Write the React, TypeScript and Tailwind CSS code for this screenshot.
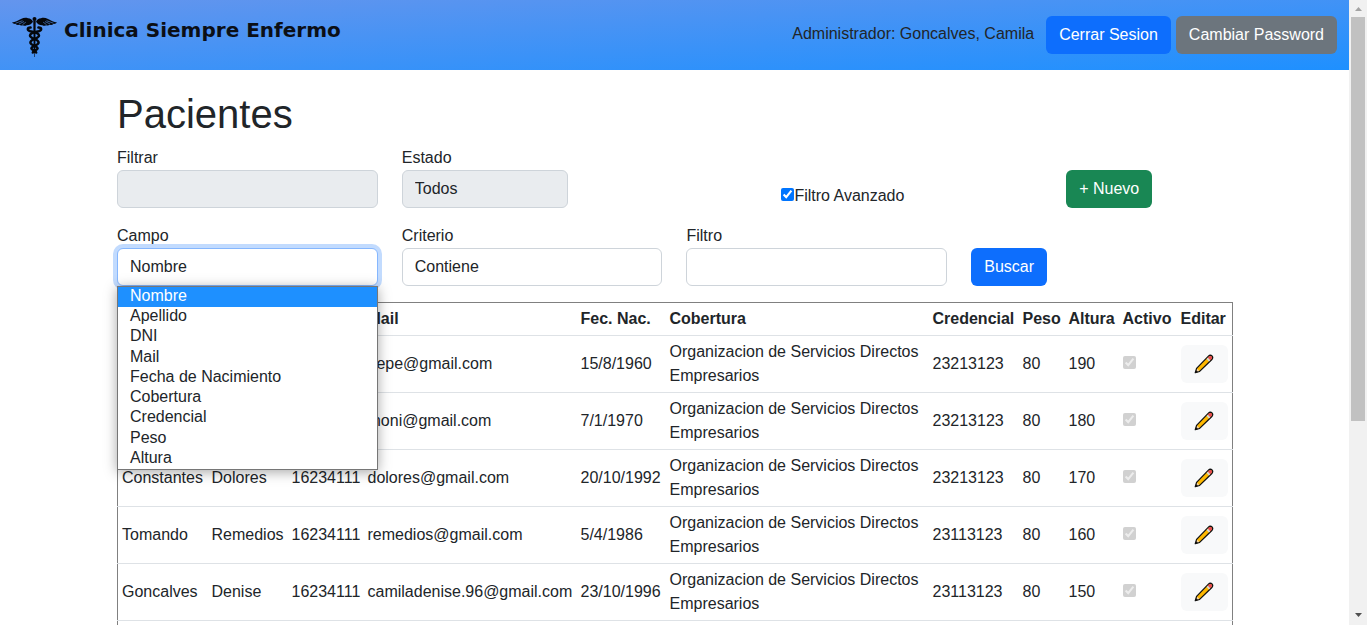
import React from "react";

type Patient = {
  apellido: string;
  nombre: string;
  dni: string;
  mail: string;
  fecha: string;
  cobertura: string;
  credencial: string;
  peso: number;
  altura: number;
};

const COBERTURA = "Organizacion de Servicios Directos Empresarios";

const patients: Patient[] = [
  { apellido: "Argento", nombre: "Pepe", dni: "16234111", mail: "pepe@gmail.com", fecha: "15/8/1960", cobertura: COBERTURA, credencial: "23213123", peso: 80, altura: 190 },
  { apellido: "Argento", nombre: "Moni", dni: "16234111", mail: "moni@gmail.com", fecha: "7/1/1970", cobertura: COBERTURA, credencial: "23213123", peso: 80, altura: 180 },
  { apellido: "Constantes", nombre: "Dolores", dni: "16234111", mail: "dolores@gmail.com", fecha: "20/10/1992", cobertura: COBERTURA, credencial: "23213123", peso: 80, altura: 170 },
  { apellido: "Tomando", nombre: "Remedios", dni: "16234111", mail: "remedios@gmail.com", fecha: "5/4/1986", cobertura: COBERTURA, credencial: "23113123", peso: 80, altura: 160 },
  { apellido: "Goncalves", nombre: "Denise", dni: "16234111", mail: "camiladenise.96@gmail.com", fecha: "23/10/1996", cobertura: COBERTURA, credencial: "23113123", peso: 80, altura: 150 },
];

const fields = [
  "Nombre",
  "Apellido",
  "DNI",
  "Mail",
  "Fecha de Nacimiento",
  "Cobertura",
  "Credencial",
  "Peso",
  "Altura",
];

const headers = ["Apellido", "Nombre", "DNI", "Mail", "Fec. Nac.", "Cobertura", "Credencial", "Peso", "Altura", "Activo", "Editar"];

const columnWidths = [
  "w-[90px]",
  "w-[80px]",
  "w-[76px]",
  "w-[213px]",
  "w-[89px]",
  "w-[263px]",
  "w-[90px]",
  "w-[46px]",
  "w-[54px]",
  "w-[58px]",
  "w-[56px]",
];

const control = "block h-[38px] w-full appearance-none rounded-md border px-3 text-base leading-6 text-[#212529] outline-none";
const button = "h-[38px] rounded-md px-[13px] pb-px text-base leading-6 text-white";

function Wing() {
  return (
    <g>
      <path d="M21 4.800C20 2.500 18.500 1.200 16 1.200C14 .4 11.500 .6 9.500 1.700C6 3.700 3 5 0 5.600C.8 6.600 2.300 7.100 3.600 6.900C4.400 7.900 5.800 8.200 7.200 7.800C8.200 8.700 9.800 8.800 11 8.300C12 9.100 13.600 9 14.600 8.300C17 8.400 19.500 7.400 21 4.800Z" fill="#05070c" />
      <path d="M3.500 6.200L10.500 3.700M6.800 7.100L12 4.500M10.500 7.600L13.800 5.200" stroke="#5b95ef" strokeWidth=".6" fill="none" />
    </g>
  );
}

function Caduceus() {
  return (
    <svg viewBox="0 0 45 40" className="h-10 w-[45px]" aria-hidden="true">
      <Wing />
      <g transform="translate(45 0) scale(-1 1)">
        <Wing />
      </g>
      <circle cx="22.500" cy="2.100" r="2" fill="#05070c" />
      <path d="M21.300 3.500H23.700L23.300 36H21.700Z" fill="#05070c" />
      <path d="M22.500 34V40" stroke="#05070c" strokeWidth=".6" />
      <g fill="none" stroke="#05070c" strokeLinecap="round">
        <path d="M18.600 10.600C15.200 10.200 14.800 13.400 18.300 14.200C22.500 14.900 27 15.700 27 18.600C27 21.800 18.400 22 18.400 25.400C18.400 28.500 25.600 28.600 25.600 31.400C25.600 33.200 20.800 33.500 20.800 35.500" strokeWidth="2.500" />
        <path d="M26.400 10.600C29.800 10.200 30.200 13.400 26.700 14.200C22.500 14.900 18 15.700 18 18.600C18 21.800 26.600 22 26.600 25.400C26.600 28.500 19.400 28.600 19.400 31.400C19.400 33.200 24.200 33.500 24.200 35.500" strokeWidth="2.500" />
      </g>
    </svg>
  );
}

function Pencil() {
  return (
    <svg viewBox="0 0 20 20" className="mx-auto block size-5" aria-hidden="true">
      <path d="M1.300 18.700L2.600 14.400L14.200 2.400C15.600 1 17 1 18 2C19 3 19 4.400 17.600 5.800L5.600 17.400Z" fill="#ffb900" stroke="#111" strokeWidth="1.300" strokeLinejoin="round" />
      <path d="M13.800 3.700L14.900 2.600C15.900 1.600 16.800 1.700 17.500 2.500C18.300 3.200 18.200 4.200 17.200 5.200L16.200 6.200Z" fill="#e74856" />
      <path d="M12.600 4.900L13.800 3.700L16.200 6.200L15 7.400Z" fill="#d5d8dc" />
      <path d="M2 18L3.200 14.700L5.300 16.900Z" fill="#f2d3ad" />
      <path d="M1.200 18.800L2.100 15.900L4.100 17.900Z" fill="#111" />
    </svg>
  );
}

function ScrollBar() {
  return (
    <div className="flex w-[18px] shrink-0 flex-col items-center bg-[#f1f1f1]" aria-hidden="true">
      <div className="flex h-[17px] items-center pt-px">
        <svg viewBox="0 0 7 4" className="h-1 w-[7px]">
          <path d="M0 4L3.500 0L7 4Z" fill="#a3a3a3" />
        </svg>
      </div>
      <div className="h-[404px] w-[14px] bg-[#c1c1c1]" />
      <div className="mt-auto flex h-[17px] items-center pb-1">
        <svg viewBox="0 0 7 4" className="h-1 w-[7px]">
          <path d="M0 0L3.500 4L7 0Z" fill="#505050" />
        </svg>
      </div>
    </div>
  );
}

function Header() {
  return (
    <header className="flex h-[70px] items-center justify-between bg-[linear-gradient(to_bottom_right,#6495ed,#1e90ff)] px-3">
      <a href="#" className="flex items-center gap-[7px] pt-1">
        <Caduceus />
        <span className="pb-3.5 font-['DejaVu_Sans',Verdana,sans-serif] text-xl leading-6 font-bold text-[#0b0f16]">
          Clinica Siempre Enfermo
        </span>
      </a>
      <div className="flex items-center">
        <span className="mr-3 pb-0.5">Administrador: Goncalves, Camila</span>
        <button type="button" className={`${button} mr-[5px] bg-[#0d6efd]`}>
          Cerrar Sesion
        </button>
        <button type="button" className={`${button} bg-[#6c757d]`}>
          Cambiar Password
        </button>
      </div>
    </header>
  );
}

function FieldSelect() {
  return (
    <div className="relative col-span-3">
      <label htmlFor="campo" className="block">Campo</label>
      <select
        id="campo"
        defaultValue="Nombre"
        className={`${control} border-[#86b7fe] bg-white ring-4 ring-[#c2dbfe]`}
      >
        {fields.map((f) => (
          <option key={f}>{f}</option>
        ))}
      </select>
      <ul
        role="listbox"
        aria-label="Campo"
        className="absolute top-full left-0 z-10 grid h-[184px] w-full grid-rows-9 border border-[#767676] bg-white shadow-[0_2px_12px_rgba(0,0,0,0.35)]"
      >
        {fields.map((f, i) => (
          <li
            key={f}
            role="option"
            aria-selected={i === 0}
            className={i === 0 ? "bg-[#1e90ff] px-3 leading-[18px] text-white" : "px-3 leading-[18px]"}
          >
            {f}
          </li>
        ))}
      </ul>
    </div>
  );
}

function Filters() {
  return (
    <form className="grid grid-cols-12 gap-x-6 gap-y-4" onSubmit={(e) => e.preventDefault()}>
      <div className="col-span-3">
        <label htmlFor="filtrar" className="block">Filtrar</label>
        <input id="filtrar" type="text" disabled className={`${control} border-[#ced4da] bg-[#e9ecef]`} />
      </div>
      <div className="col-span-2">
        <label htmlFor="estado" className="block">Estado</label>
        <select id="estado" disabled className={`${control} border-[#ced4da] bg-[#e9ecef] opacity-100`}>
          <option>Todos</option>
        </select>
      </div>
      <div className="col-span-3 col-start-8 flex items-center self-end">
        <input id="avanzado" type="checkbox" defaultChecked className="mb-1 size-[13px]" />
        <label htmlFor="avanzado">Filtro Avanzado</label>
      </div>
      <div className="col-span-2 col-start-11 self-end">
        <button type="button" className={`${button} bg-[#198754]`}>+ Nuevo</button>
      </div>

      <FieldSelect />
      <div className="col-span-3">
        <label htmlFor="criterio" className="block">Criterio</label>
        <select id="criterio" className={`${control} border-[#ced4da] bg-white`}>
          <option>Contiene</option>
        </select>
      </div>
      <div className="col-span-3">
        <label htmlFor="filtro" className="block">Filtro</label>
        <input id="filtro" type="text" className={`${control} border-[#ced4da] bg-white`} />
      </div>
      <div className="col-span-3 self-end">
        <button type="submit" className={`${button} bg-[#0d6efd]`}>Buscar</button>
      </div>
    </form>
  );
}

function PatientsTable() {
  return (
    <table className="mt-4 w-full table-fixed border-collapse border border-[#808080] text-left">
      <colgroup>
        {columnWidths.map((w, i) => (
          <col key={i} className={w} />
        ))}
      </colgroup>
      <thead>
        <tr className="border-b border-[#dee2e6]">
          {headers.map((h) => (
            <th key={h} scope="col" className="p-1 font-bold whitespace-nowrap">{h}</th>
          ))}
        </tr>
      </thead>
      <tbody>
        {patients.map((p) => (
          <tr key={p.mail} className="border-b border-[#dee2e6]">
            <td className="p-1">{p.apellido}</td>
            <td className="p-1">{p.nombre}</td>
            <td className="p-1">{p.dni}</td>
            <td className="p-1 whitespace-nowrap">{p.mail}</td>
            <td className="p-1 whitespace-nowrap">{p.fecha}</td>
            <td className="p-1">{p.cobertura}</td>
            <td className="p-1">{p.credencial}</td>
            <td className="p-1">{p.peso}</td>
            <td className="p-1">{p.altura}</td>
            <td className="px-1 pt-1 pb-2">
              <input type="checkbox" defaultChecked disabled aria-label={`${p.nombre} activo`} className="block size-[13px]" />
            </td>
            <td className="p-1">
              <button type="button" aria-label={`Editar ${p.nombre}`} className="block h-[38px] w-full rounded-md bg-[#f8f9fa]">
                <Pencil />
              </button>
            </td>
          </tr>
        ))}
        <tr>
          <td colSpan={11} className="h-14" />
        </tr>
      </tbody>
    </table>
  );
}

export default function App() {
  return (
    <div className="flex h-screen overflow-hidden bg-white font-['Liberation_Sans',Arial,sans-serif] text-base leading-6 text-[#212529]">
      <div className="min-w-0 flex-1 overflow-hidden">
        <Header />
        <main className="mx-auto max-w-[1139px] px-3 pt-5">
          <h1 className="mb-2 text-[40px] leading-[48px]">Pacientes</h1>
          <Filters />
          <PatientsTable />
        </main>
      </div>
      <ScrollBar />
    </div>
  );
}
